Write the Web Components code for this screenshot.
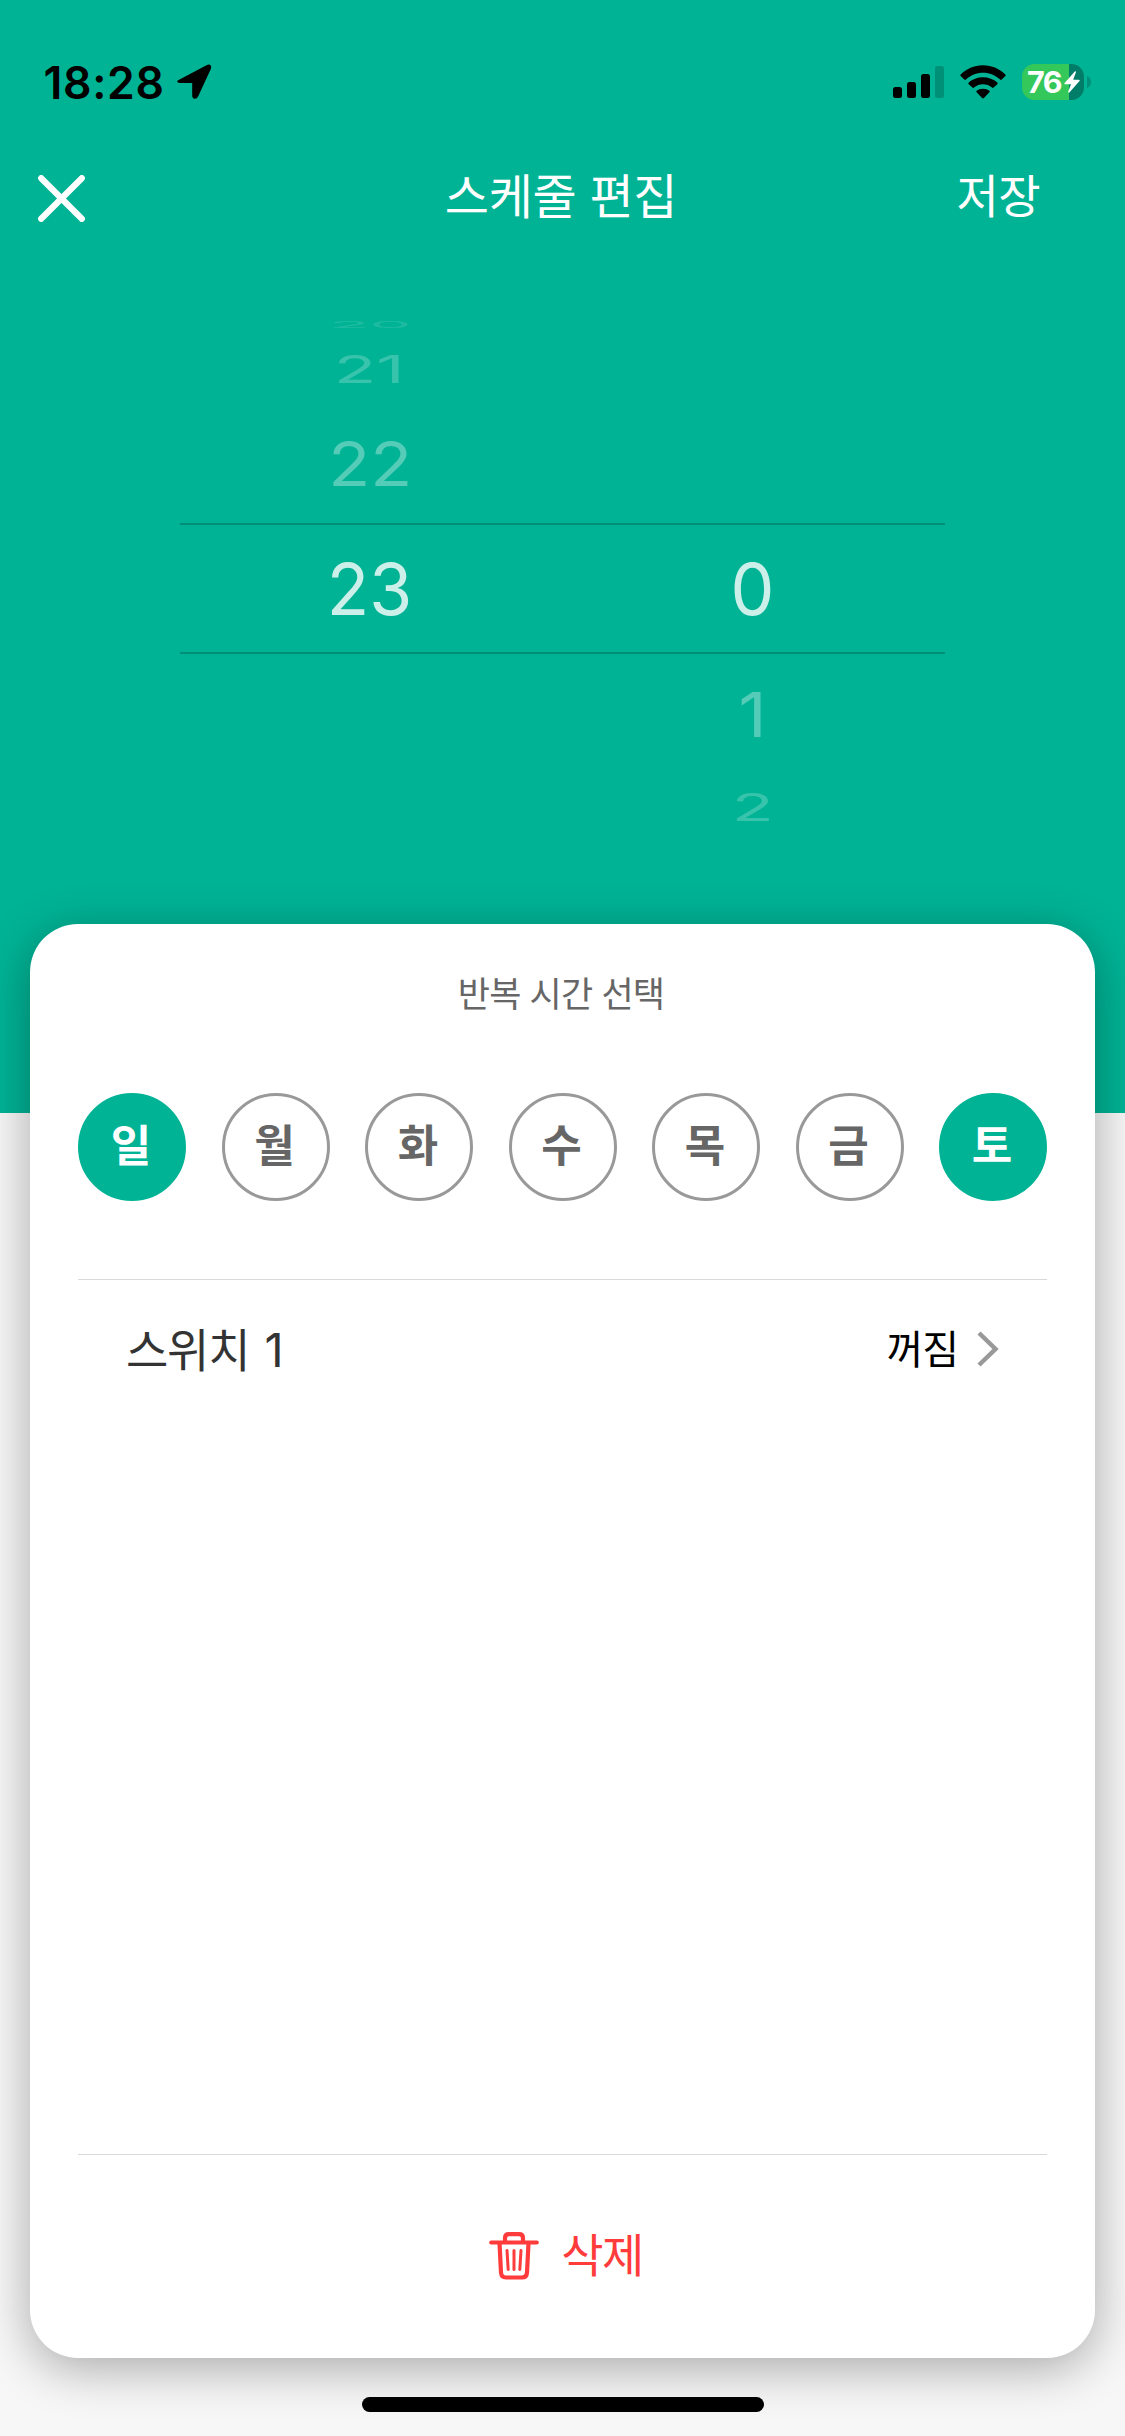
<!DOCTYPE html>
<html lang="ko">
<head>
<meta charset="utf-8">
<title>스케줄 편집</title>
<style>
html,body{margin:0;padding:0}
body{width:1125px;height:2436px;overflow:hidden;background:#f7f7f7;font-family:Inter,"Noto Sans CJK KR",sans-serif}
</style>
</head>
<body>
<schedule-app></schedule-app>
<script>
function define(name, html) {
  const t = document.createElement('template');
  t.innerHTML = '<style>*{box-sizing:border-box}svg{display:block;flex:none}</style>' + html;
  customElements.define(name, class extends HTMLElement {
    constructor() {
      super();
      this.attachShadow({mode: 'open'}).appendChild(t.content.cloneNode(true));
    }
  });
}

define('status-bar', `
<style>
:host{display:flex;align-items:center;height:164px;padding:0 34px 0 43.500px;color:#000}
.time{font:600 44.500px/60px Inter,sans-serif;letter-spacing:.7px;width:133.500px;white-space:nowrap;padding-top:1px}
.gap{flex:1}
.bars{margin-right:16px}
.wifi{margin-right:16px}
.battery{display:flex;align-items:center;width:62px;height:36px;border-radius:12.5px;padding-left:5px;background:linear-gradient(90deg,#34c759 47px,#007d68 47px)}
.battery b{font:700 30.500px/36px Inter,sans-serif;color:#fff;letter-spacing:-1.6px;width:36.500px}
.nub{margin-left:3px}
</style>
<span class="time">18:28</span>
<svg width="35" height="36" viewBox="0 0 35 36"><path d="M3 15.2L29.5 1.2Q32.2 0 33.7 1.3Q34.8 2.7 33.7 5.2L21.1 32.4Q19.8 35 17.7 34.8Q15.2 34.5 15.2 31.6V19H3.4Q.5 19 .1 17.4Q0 16.4 3 15.2Z"/></svg>
<span class="gap"></span>
<svg class="bars" width="51" height="32" viewBox="0 0 51 32"><rect y="21" width="9" height="11" rx="2.5"/><rect x="14" y="16" width="9" height="16" rx="2.5"/><rect x="28" y="8" width="9" height="24" rx="2.5"/><rect x="42" width="9" height="32" rx="2.5" fill="#008f77"/></svg>
<svg class="wifi" width="46" height="34" viewBox="0 0 46 34"><path d="M23 .3C32 .3 39.8 4.100 45.300 9.400Q46.100 10.200 45.300 11.100L41.700 14.600Q40.900 15.300 40.100 14.600C35.500 10.200 29.600 7.700 23 7.700S10.500 10.200 5.900 14.600Q5.100 15.300 4.300 14.600L.7 11.100Q-.1 10.200.7 9.400C6.200 4.100 14 .3 23 .3Z"/><path d="M23 12.200C28.600 12.200 33.600 14.200 37.300 17.500Q38.100 18.300 37.300 19.200L33.600 22.600Q32.800 23.300 32 22.600C29.500 20.500 26.500 19.300 23 19.300S16.500 20.500 14 22.600Q13.200 23.300 12.400 22.600L8.700 19.200Q7.900 18.300 8.700 17.500C12.400 14.200 17.400 12.200 23 12.200Z"/><path d="M23 23.800C25.700 23.800 27.700 24.600 29.400 25.700Q30.200 26.400 29.400 27.200L23.900 33Q23 33.800 22.100 33L16.600 27.200Q15.800 26.400 16.600 25.700C18.300 24.600 20.300 23.800 23 23.800Z"/></svg>
<div class="battery"><b>76</b><svg width="16" height="22" viewBox="0 0 16 22"><path fill="#fff" d="M11 .2L.6 12.100Q-.2 13.200 1.100 13.200H7L4.200 20.800Q4.300 22.300 5.400 21.500L15.500 10Q16.300 8.800 14.900 8.800H9.200L12 1Q12 0 11 .2Z"/></svg></div>
<svg class="nub" width="4" height="12" viewBox="0 0 4 12"><path fill="#009079" d="M0 0Q4 1.500 4 6T0 12Z"/></svg>
`);

define('nav-bar', `
<style>
:host{display:grid;grid-template-columns:300px 1fr 300px;align-items:center;height:69px;padding:0 38px;color:#fff;font-family:"Noto Sans CJK KR",sans-serif}
h1{margin:0;text-align:center;font-size:48px;font-weight:400;line-height:58px;padding-bottom:11px;letter-spacing:-.3px;padding-right:3px}
span{text-align:right;font-size:46px;line-height:58px;padding:0 47px 11px 0;letter-spacing:-.6px}
</style>
<svg width="47" height="47" viewBox="0 0 47 47"><path d="M3.200 3.200L43.800 43.800M43.800 3.200L3.200 43.800" fill="none" stroke="#fff" stroke-width="6.200" stroke-linecap="round"/></svg>
<h1>스케줄 편집</h1>
<span>저장</span>
`);

define('wheel-item', `
<style>
:host{display:flex;align-items:center;justify-content:center;height:var(--h);font:400 71px/80px Inter,sans-serif;color:#fff;opacity:var(--o);padding-right:3px}
span{flex:none;transform:scale(var(--sx,.98),var(--sy,1))}
</style>
<span><slot></slot></span>
`);

define('time-picker', `
<style>
:host{display:block;padding:82px 180px 0;height:691px}
.wheels{display:grid;grid-template-columns:1fr 1fr;background:linear-gradient(#008e77,#008e77) 0 208px/100% 2px no-repeat,linear-gradient(#008e77,#008e77) 0 337px/100% 2px no-repeat}
.right{padding-top:208px}
</style>
<div class="wheels">
<div>
<wheel-item style="--h:20px;--sy:.125;--sx:.94;--o:.11">20</wheel-item>
<wheel-item style="--h:68px;--sy:.545;--sx:.98;--o:.22;padding-right:5px">21</wheel-item>
<wheel-item style="--h:120px;--sy:.87;--sx:.97;--o:.33;padding-right:2px">22</wheel-item>
<wheel-item style="--h:131px;--o:.8">23</wheel-item>
</div>
<div class="right">
<wheel-item style="--h:131px;--o:.8">0</wheel-item>
<wheel-item style="--h:120px;--sy:.87;--sx:.97;--o:.33">1</wheel-item>
<wheel-item style="--h:66px;--sy:.53;--sx:.97;--o:.22">2</wheel-item>
</div>
</div>
`);

define('day-chip', `
<style>
:host{display:flex;align-items:center;justify-content:center;width:108px;height:108px;border-radius:50%;border:3px solid #999;color:#666;font:700 44px/60px "Noto Sans CJK KR",sans-serif;padding:0 2px 8px 0}
:host([selected]){background:#00b395;border-color:#00b395;color:#fff}
</style>
<slot></slot>
`);

define('switch-row', `
<style>
:host{display:flex;align-items:center;height:139px;padding:0 48px;font-family:"Noto Sans CJK KR",sans-serif}
.name{flex:1;color:#333;font-size:46px;line-height:60px;letter-spacing:-1.200px;padding-bottom:3px}
.num{font-family:Inter,sans-serif;font-size:47px;margin-left:3.500px}
.state{color:#000;font-size:40px;line-height:60px;letter-spacing:-1px;padding-bottom:6px;margin-right:19px}
svg{margin-bottom:1px}
</style>
<span class="name">스위치 <span class="num">1</span></span>
<span class="state">꺼짐</span>
<svg width="22" height="36" viewBox="0 0 22 36"><path d="M2 2L18.500 18L2 34" fill="none" stroke="#999" stroke-width="4.500"/></svg>
`);

define('delete-button', `
<style>
:host{display:flex;align-items:center;justify-content:center;height:203px;color:#ff3b3b;font:400 46px/60px "Noto Sans CJK KR",sans-serif}
svg{margin:0 22px 2px 7px}
span{padding-bottom:9px;letter-spacing:-1.500px}
</style>
<svg width="50" height="48" viewBox="0 0 50 48" fill="none" stroke="#ff3b3b" stroke-linecap="round" stroke-linejoin="round"><path stroke-width="4.200" d="M2.200 10.500H47.800M16 10V6Q16 2.200 20 2.200H30Q34 2.200 34 6V10M10.500 11L12 40.500Q12.300 45.500 17 45.500H33Q37.700 45.500 38 40.500L39.500 11"/><path stroke-width="3" d="M18 18.500L19.200 37.500M25 18.500V37.500M32 18.500L30.800 37.500"/></svg>
<span>삭제</span>
`);

define('schedule-card', `
<style>
:host{display:flex;flex-direction:column;height:1434px;margin:0 30px;padding:0 48px;border-radius:48px;background:#fff;box-shadow:0 10px 49px rgba(0,0,0,.32)}
h2{margin:0;height:169px;text-align:center;color:#666;font:400 35px/60px "Noto Sans CJK KR",sans-serif;letter-spacing:-.8px;padding:38px 3px 0 0}
.days{display:flex;justify-content:space-between;height:186px}
.list{flex:1;border-top:1px solid #d9d9d9}
.foot{border-top:1px solid #d9d9d9}
</style>
<h2>반복 시간 선택</h2>
<div class="days"><day-chip selected>일</day-chip><day-chip>월</day-chip><day-chip>화</day-chip><day-chip>수</day-chip><day-chip>목</day-chip><day-chip>금</day-chip><day-chip selected>토</day-chip></div>
<div class="list"><switch-row></switch-row></div>
<div class="foot"><delete-button></delete-button></div>
`);

define('home-indicator', `
<style>
:host{display:block;width:402px;height:15px;border-radius:8px;background:#000;margin:39px auto 0 362px}
</style>
`);

define('schedule-app', `
<style>
:host{display:flex;flex-direction:column;width:1125px;height:2436px;overflow:hidden;background:linear-gradient(#00b395 1113px,#f7f7f7 1113px)}
</style>
<status-bar></status-bar>
<nav-bar></nav-bar>
<time-picker></time-picker>
<schedule-card></schedule-card>
<home-indicator></home-indicator>
`);
</script>
</body>
</html>
